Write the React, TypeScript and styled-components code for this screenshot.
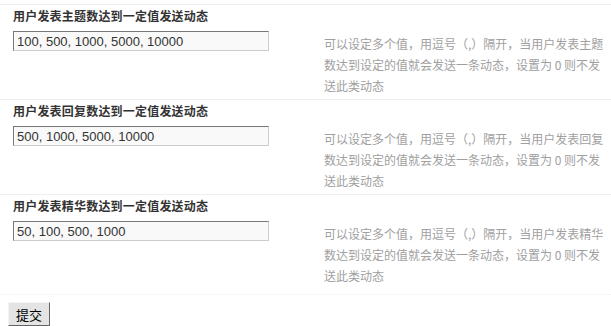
import styled, { createGlobalStyle } from 'styled-components';

const Global = createGlobalStyle`
  html, body {
    margin: 0;
    padding: 0;
    background: #fff;
  }
  body {
    font-family: "Liberation Sans", "Noto Sans CJK SC", sans-serif;
    font-size: 12px;
    color: #333;
  }
`;

const Page = styled.div`
  padding-top: 4px;
  width: 611px;
  height: 326px;
  box-sizing: border-box;
  display: flex;
  flex-direction: column;
`;

const Section = styled.div`
  border-top: 1px solid #efefef;
  padding-bottom: 3px;
  height: 95px;
  box-sizing: border-box;
`;

const Title = styled.div`
  padding: 2px 0 0 13px;
  line-height: 18px;
  font-size: 12px;
  letter-spacing: 0.2px;
  font-weight: bold;
  color: #333;
  font-family: "Noto Sans CJK SC", sans-serif;
`;

const Body = styled.div`
  display: flex;
  padding-top: 6px;
`;

const InputCell = styled.div`
  width: 324px;
  padding-left: 13px;
  box-sizing: border-box;
  flex-shrink: 0;
`;

const TextInput = styled.input`
  width: 256px;
  height: 20px;
  box-sizing: border-box;
  margin: 0;
  padding: 0 3px;
  border: 1px solid;
  border-color: #777 #ccc #ccc #777;
  background: #f9f9f9;
  font-family: "Liberation Sans", sans-serif;
  font-size: 13px;
  color: #333;
  outline: none;
`;

const Tips = styled.div`
  width: 284px;
  padding-top: 2px;
  line-height: 21px;
  font-size: 12px;
  color: #a0a0a0;
  font-family: "Noto Sans CJK SC", sans-serif;
`;

const Actions = styled.div`
  border-top: 1px dotted #f2f2f2;
  padding: 7px 0 0 8px;
  margin-top: 5px;
  flex: 1;
  border-bottom: 2px solid #c4d4e4;
`;

const Submit = styled.button`
  width: 42px;
  height: 24px;
  margin: 0;
  padding: 0;
  font-size: 13px;
  font-family: "Noto Sans CJK SC", sans-serif;
  color: #000;
  background: #e4e4e4;
  border: 1px solid;
  border-color: #f4f4f4 #666 #666 #f4f4f4;
`;

const settings = [
  {
    title: '用户发表主题数达到一定值发送动态',
    value: '100, 500, 1000, 5000, 10000',
    tip: '可以设定多个值，用逗号（,）隔开，当用户发表主题数达到设定的值就会发送一条动态，设置为 0 则不发送此类动态',
  },
  {
    title: '用户发表回复数达到一定值发送动态',
    value: '500, 1000, 5000, 10000',
    tip: '可以设定多个值，用逗号（,）隔开，当用户发表回复数达到设定的值就会发送一条动态，设置为 0 则不发送此类动态',
  },
  {
    title: '用户发表精华数达到一定值发送动态',
    value: '50, 100, 500, 1000',
    tip: '可以设定多个值，用逗号（,）隔开，当用户发表精华数达到设定的值就会发送一条动态，设置为 0 则不发送此类动态',
  },
];

export default function App() {
  return (
    <Page>
      <Global />
      {settings.map((s) => (
        <Section key={s.title}>
          <Title>{s.title}</Title>
          <Body>
            <InputCell>
              <TextInput defaultValue={s.value} />
            </InputCell>
            <Tips>{s.tip}</Tips>
          </Body>
        </Section>
      ))}
      <Actions>
        <Submit>提交</Submit>
      </Actions>
    </Page>
  );
}
